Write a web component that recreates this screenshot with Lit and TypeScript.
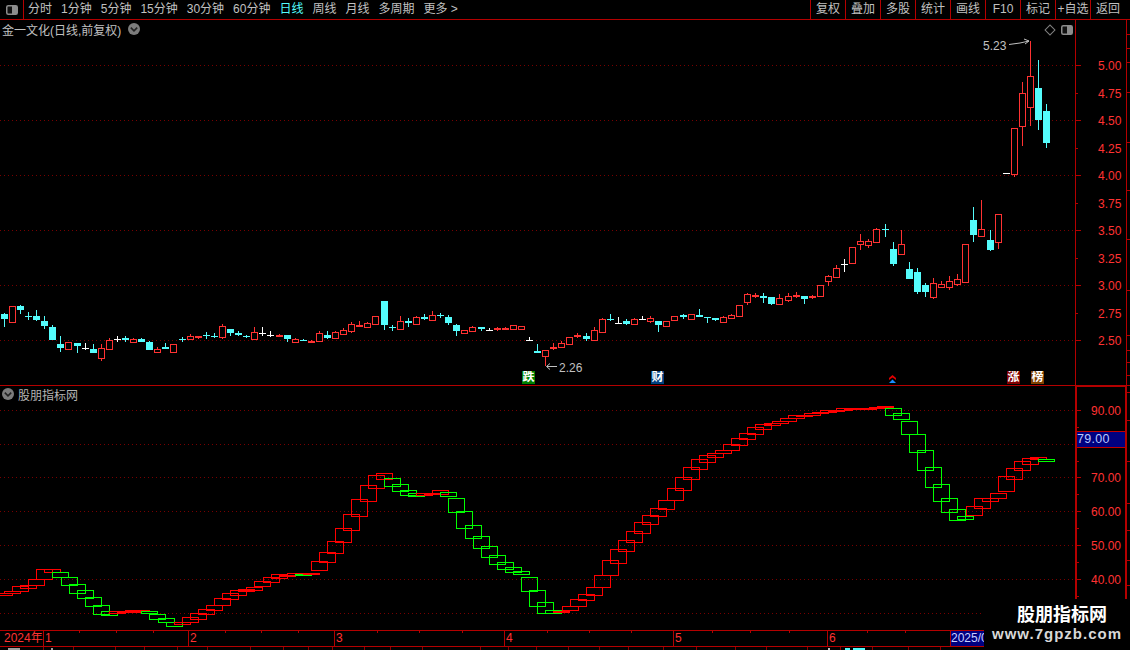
import { LitElement, html, svg, css } from "lit";
import { customElement } from "lit/decorators.js";

type C = [string, number, number, number, number];
const candles: C[] = [
["c",314,319,313,327],["r",306,322,306,322],["c",306,310,305,314],["c",316,317,312,320],["c",316,320,310,321],["c",321,326,316,329],["c",327,340,325,340],["c",344,348,336,352],["r",342,349,342,350],["c",343,346,343,353],
["w",348,349,343,350],["c",349,353,344,353],["r",348,358,344,361],["r",340,349,338,349],["w",339,340,336,342],["c",338,340,336,342],["r",339,342,338,343],["c",339,342,338,342],["c",342,350,341,350],["r",349,352,347,352],
["c",347,349,343,349],["r",344,352,344,352],["c",339,340,337,342],["r",336,339,334,339],["R",336,338,336,339],["c",335,336,332,339],["c",336,337,333,338],["r",326,337,324,339],["c",329,333,329,336],["c",333,335,331,336],
["c",336,337,335,338],["r",332,339,327,339],["w",333,334,327,336],["w",335,336,331,337],["R",335,337,334,337],["c",335,339,335,342],["r",339,342,338,342],["c",340,341,339,341],["R",341,343,340,343],["r",333,341,331,341],
["c",335,338,331,339],["r",332,338,331,338],["r",330,334,328,335],["r",324,331,322,333],["R",325,327,321,327],["r",323,327,322,327],["r",316,324,316,324],["c",301,325,301,330],["c",327,328,325,331],["r",321,329,316,329],
["c",321,323,318,327],["r",317,324,316,324],["c",317,319,314,320],["r",315,320,311,321],["c",315,316,313,318],["c",317,323,315,325],["c",325,331,324,336],["r",330,333,330,333],["r",327,331,326,331],["c",327,329,327,331],
["w",330,331,328,331],["R",328,330,327,331],["R",328,330,327,330],["r",325,329,325,330],["r",326,329,326,329],["w",340,341,337,341],["c",351,353,344,353],["r",350,356,350,366],["R",347,349,343,350],["r",343,347,341,347],
["r",337,344,337,344],["R",335,337,333,338],["c",336,339,333,341],["r",330,340,327,340],["r",319,332,318,332],["c",319,320,314,321],["w",323,324,317,324],["c",321,324,319,325],["r",319,324,318,324],["w",319,320,316,320],
["r",318,321,316,323],["c",321,325,321,332],["r",321,326,321,326],["r",316,320,316,320],["c",315,317,314,319],["r",314,319,314,319],["c",315,317,309,317],["c",317,318,317,323],["c",318,320,318,321],["r",317,322,316,322],
["r",315,318,314,318],["r",305,316,305,316],["r",294,302,293,305],["R",295,297,293,298],["c",296,298,293,303],["c",297,304,297,305],["r",298,304,294,304],["r",296,300,293,302],["R",295,297,292,298],["c",296,299,296,304],
["R",296,298,295,299],["r",285,296,285,296],["r",276,281,275,286],["r",268,277,265,277],["w",264,265,259,272],["r",247,263,247,263],["r",241,244,234,250],["r",241,245,239,248],["r",229,242,228,242],["c",229,230,224,237],
["c",249,264,242,266],["r",244,254,230,254],["c",269,279,262,279],["c",272,292,268,294],["c",285,292,283,297],["r",283,297,278,299],["r",284,287,281,287],["r",281,287,276,290],["r",279,284,274,286],["r",244,282,244,282],
["c",220,235,207,242],["r",229,236,200,237],["c",240,250,230,251],["r",214,242,214,249],["w",173,174,173,174],["r",128,174,128,177],["r",93,126,82,146],["r",76,107,41,126],["c",88,120,60,130],["c",111,143,104,148],
];
// [colour, top, bottom] per box, starting one step left of the first full box
const boxes: [string, number, number][] = ([
"r593,595","r591,593","r586,591","r585,588","r579,585","r569,579","r569,572","g572,577","g577,585","g584,593","g590,598","g597,606","g605,614","g611,615",
"r611,613","r611,612","r610,612","r610,611","g611,613","g614,619","g618,622","g622,626","r622,624","r617,622","r613,619","r609,614","r605,610","r598,605","r593,599","r590,595",
"r589,591","r587,590","r581,586","r577,582","r574,578","r574.5,575.5","r573,574.5","g574,574.5","r573,573.5","r561,570","r552,562","r541,553","r528,542","r514,530","r499,516","r485,501","r475,488","r473,479",
"g478,486","g484,491","g490,495","g493,496","r493,495","r493,494","r490,494","g492,496","g498,512","g511,528","g525,538","g536,548","g546,557","g555,564","g562,569","g567,572","g571,574","g577,591","g590,606","g602,613","g610,613",
"r610.5,612","r606,610","r599,606","r594,600","r587,595","r575,587","r560,575","r549,563","r540,551","r531,542","r522,533","r515,524","r508,516","r500,509","r488,500","r477,490","r467,479","r459,469","r455,462","r453,457","r450,453","r444,450","r438,445","r433,439","r427,434","r424,429","r423,425","r421,423","r418,421","r415,418","r415,416","r413,415","r412,413","r410,412","r410,411","r408,410","r408,409","r407.5,408.5","r407.5,408","r407,407.5","r405.5,407",
"g408,415","g413,419","g421,434","g434,452","g450,470","g467,487","g484,501","g498,512","g509,520","g516,519",
"r506,515","r498,508","r498,501","r493,498","r476,491","r468,479","r461,470","r458,464","r457,459","g459,461",
] as string[]).map((s) => {
  const [a, b] = s.slice(1).split(",").map(Number);
  return [s[0], a, b] as [string, number, number];
});

const topLabels: [string, number][] = [["5.00",65],["4.75",93],["4.50",120],["4.25",148],["4.00",175],["3.75",203],["3.50",230],["3.25",258],["3.00",285],["2.75",313],["2.50",340]];
const botLabels: [string, number][] = [["90.00",410],["70.00",477],["60.00",511],["50.00",545],["40.00",579]];
const botGrid = [410,444,477,511,545,579,613];
const leftItems = ["分时","1分钟","5分钟","15分钟","30分钟","60分钟","日线","周线","月线","多周期"];
const rightItems = ["复权","叠加","多股","统计","画线","F10","标记","+自选","返回"];
const months: [string, number][] = [["1",43],["2",188],["3",334],["4",504],["5",673],["6",827]];
const dateTicks = [79,116,153,225,261,298,377,419,462,547,589,631,712,750,789,867,905];
const tabSeps = [43,73,115,144,177,207,250,283,308,332,364,390,422,480,508,536,568,599,628,663,696,735,766,807,840,872,908,940];
const edgeTicks = [34,48,62,92,142,190,239,290,335,350,362,375,392,420,461,503,530,560,585];

const RED = "#ff3232", CYAN = "#54fcfc", LINE = "#b40000", GRID = "#780000";
const cx = (i: number) => Math.floor(4.3 + 8.08 * i);

function candle(c: C, i: number) {
  const [t, top, bot, hi, lo] = c;
  const x = cx(i);
  const col = t === "c" ? CYAN : t === "w" ? "#fff" : RED;
  const h = bot - top;
  const wick = t === "r"
    ? svg`<path d="M${x + .5} ${hi}V${top}M${x + .5} ${bot}V${lo}" stroke=${col} />`
    : svg`<path d="M${x + .5} ${hi}V${lo}" stroke=${col} />`;
  const body = t === "r"
    ? svg`<rect x=${x - 3 + .5} y=${top + .5} width="6" height=${h} fill="#000" stroke=${col} />`
    : svg`<rect x=${x - 3} y=${top} width="7" height=${Math.max(h, 1)} fill=${col} />`;
  return svg`${wick}${body}`;
}

function box([c, t, b]: [string, number, number], k: number) {
  const x = Math.round(4 + 8.08 * (k - 1)) + .5;
  const top = Math.round(t);
  const h = Math.max(Math.round(b) - top, 1);
  return svg`<rect x=${x} y=${top + .5} width="16" height=${h} stroke=${c === "r" ? "#ff0000" : "#00ff00"}/>`;
}

@customElement("chart-icon")
class ChartIcon extends LitElement {
  static styles = css`:host{display:block;width:12px;height:10px} svg{display:block}`;
  render() {
    return html`<svg width="12" height="10" viewBox="0 0 12 10"><rect x=".75" y=".75" width="10.5" height="8.5" rx="1.5" fill="#111" stroke="#8c8c8c" stroke-width="1.5"/><rect x="6" y="1" width="5" height="8" fill="#8c8c8c"/></svg>`;
  }
}

@customElement("round-chevron")
class RoundChevron extends LitElement {
  static styles = css`:host{display:block;width:12px;height:12px} svg{display:block}`;
  render() {
    return html`<svg width="12" height="12" viewBox="0 0 12 12"><circle cx="6" cy="6" r="6" fill="#7c7c7c"/><path d="M2.8 4.6 6 7.8 9.2 4.6" fill="none" stroke="#222" stroke-width="1.6"/></svg>`;
  }
}

@customElement("app-root")
export class AppRoot extends LitElement {
  static styles = css`
    :host { display: block; width: 1130px; height: 650px; background: #000; position: relative; overflow: hidden;
      font-family: "Liberation Sans", "Noto Sans CJK SC", sans-serif; font-size: 12px; color: #c0c0c0; }
    svg { display: block; }
    .toolbar { display: flex; height: 19px; border-bottom: 1px solid #b40000; align-items: stretch; }
    .menu-btn { width: 24px; border-right: 1px solid #b40000; display: flex; align-items: center; justify-content: center; box-sizing: border-box; }
    .left { display: flex; gap: 9px; padding-left: 4px; align-items: center; line-height: 19px; flex: 1; }
    .left .on { color: #54fcfc; }
    .right { display: flex; padding-right: 5px; }
    .right span { width: 34px; border-left: 1px solid #b40000; text-align: center; line-height: 19px; white-space: nowrap; overflow: hidden; }
    .pane { position: relative; }
    .top { height: 365px; border-bottom: 1px solid #b40000; }
    .bottom { height: 244px; }
    .title { position: absolute; left: 2px; top: 1px; display: flex; align-items: center; gap: 7px; height: 16px; white-space: nowrap; }
    .tools { position: absolute; left: 1046px; top: 5px; display: flex; align-items: center; gap: 7px; }
    .diamond { width: 6px; height: 6px; border: 1px solid #808080; transform: rotate(45deg); }
    .sub-title { position: absolute; left: 2px; top: 0; display: flex; align-items: center; gap: 4px; height: 16px; white-space: nowrap; color: #b4b4b4; }
    .badge { position: absolute; top: 351px; width: 13px; height: 13px; line-height: 13px; text-align: center; color: #fff; font-size: 12px; font-weight: 700; overflow: hidden; }
    .b-green { background: #008000; } .b-blue { background: #004080; } .b-red { background: #800000; } .b-brown { background: #804000; }
    .price-tag { position: absolute; left: 1077px; top: 45px; width: 48px; height: 15px; background: #000080; border-top: 1px solid #c00000; border-bottom: 1px solid #c00000; color: #b8c8ff; line-height: 15px; font-size: 12.5px; letter-spacing: .3px; }
    .dates { position: relative; height: 15px; border-top: 1px solid #b40000; border-bottom: 1px solid #b40000; color: #ff3232; }
    .year { position: absolute; left: 4px; top: 0; line-height: 15px; }
    .month { position: absolute; top: 0; height: 15px; line-height: 15px; border-left: 1px solid #b40000; padding-left: 1px; }
    .tick { position: absolute; top: 0; width: 1px; height: 2px; background: #b40000; }
    .range { position: absolute; left: 950px; top: 0; width: 50px; height: 15px; background: #000080; border-left: 1px solid #b40000; color: #c8d0ff; line-height: 15px; white-space: nowrap; box-sizing: border-box; }
    .status { position: relative; height: 3px; overflow: hidden; }
    .sep { position: absolute; top: 0; width: 1px; height: 3px; background: #8c0000; }
    .frag { position: absolute; top: 1px; height: 2px; }
    .mark { position: absolute; left: 984px; top: 599px; width: 146px; height: 51px; background: #000; display: flex; flex-direction: column; align-items: center; color: #fff; font-weight: 700; padding-left: 3px; box-sizing: border-box; }
    .mark .cn { font-size: 18px; line-height: 22px; margin-top: 3px; margin-left: 7px; font-family: "Noto Sans CJK SC", sans-serif; }
    .mark .url { font-size: 15px; line-height: 16px; margin-top: 2px; margin-right: 3px; letter-spacing: 1px; color: #d8d8d8; }
  `;

  render() {
    return html`
      <div class="toolbar">
        <div class="menu-btn"><chart-icon></chart-icon></div>
        <div class="left">
          ${leftItems.map((t) => html`<span class=${t === "日线" ? "on" : ""}>${t}</span>`)}
          <span>更多 &gt;</span>
        </div>
        <div class="right">${rightItems.map((t) => html`<span>${t}</span>`)}</div>
      </div>

      <div class="pane top">
        <svg width="1130" height="365" viewBox="0 20 1130 365" shape-rendering="crispEdges">
          ${topLabels.map(([l, y], i) => svg`
            ${i % 2 === 0 ? svg`<path d="M0 ${y + .5}H1075" stroke=${GRID} stroke-dasharray="1 3"/>` : ""}
            <path d="M1075 ${y + .5}H${i % 2 === 0 ? 1081 : 1078}" stroke=${LINE}/>
            <text x="1098" y=${y + 4.5} fill=${RED} font-size="12" shape-rendering="auto">${l}</text>`)}
          <path d="M1075.5 20V385M1126.5 20V385" stroke=${LINE}/>
          ${edgeTicks.filter((y) => y < 385).map((y) => svg`<path d="M1127 ${y + .5}H1130" stroke=${LINE}/>`)}
          ${candles.map(candle)}
          <g shape-rendering="auto" fill="none" stroke="#c0c0c0">
            <path d="M1009 44.5 1020 43 1029 41M1024 39 1029 41 1025 44"/>
            <path d="M557 366.5H547M550 363.5 546.5 366.5 550 369.5"/>
          </g>
          <text x="983" y="50" fill="#c0c0c0" font-size="12" shape-rendering="auto">5.23</text>
          <text x="559" y="372" fill="#c0c0c0" font-size="12" shape-rendering="auto">2.26</text>
          <g shape-rendering="auto">
            <path d="M889 378 892.5 375 896 378V380L892.5 377.5 889 380Z" fill="#e00000"/>
            <path d="M889 383 892.5 379.5 896 383Z" fill="#1a8cff"/>
          </g>
        </svg>
        <div class="title"><span>金一文化(日线,前复权)</span><round-chevron></round-chevron></div>
        <div class="tools"><span class="diamond"></span><chart-icon></chart-icon></div>
        <span class="badge b-green" style="left:522px">跌</span>
        <span class="badge b-blue" style="left:651px">财</span>
        <span class="badge b-red" style="left:1007px">涨</span>
        <span class="badge b-brown" style="left:1031px">榜</span>
      </div>

      <div class="pane bottom">
        <svg width="1130" height="244" viewBox="0 386 1130 244" shape-rendering="crispEdges">
          ${botGrid.map((y) => svg`<path d="M0 ${y + .5}H1075" stroke=${GRID} stroke-dasharray="1 3"/>`)}
          ${botGrid.map((y) => svg`<path d="M1077 ${y + .5}H1081" stroke=${LINE}/>`)}
          ${botGrid.slice(0, 6).map((y) => svg`<path d="M1077 ${y + 17.5}H1079" stroke=${LINE}/>`)}
          ${botLabels.map(([l, y]) => svg`<text x="1091" y=${y + 4.5} fill=${RED} font-size="12" shape-rendering="auto">${l}</text>`)}
          <path d="M1076 386V630" stroke=${LINE} stroke-width="2"/>
          <path d="M1126 386V630M1076 386.5H1126" stroke=${LINE} stroke-width="1.5"/>
          ${edgeTicks.filter((y) => y > 385).map((y) => svg`<path d="M1127 ${y + .5}H1130" stroke=${LINE}/>`)}
          <g fill="none">${boxes.map(box)}</g>
        </svg>
        <div class="sub-title"><round-chevron></round-chevron><span>股朋指标网</span></div>
        <div class="price-tag">79.00</div>
      </div>

      <div class="dates">
        ${dateTicks.map((x) => html`<span class="tick" style="left:${x}px"></span>`)}
        <span class="year">2024年</span>
        ${months.map(([m, x]) => html`<span class="month" style="left:${x}px">${m}</span>`)}
        <span class="range">2025/06</span>
      </div>
      <div class="status">
        ${tabSeps.map((x) => html`<span class="sep" style="left:${x}px"></span>`)}
        <span class="frag" style="left:8px;width:12px;background:#a0a0a0"></span>
        <span class="frag" style="left:51px;width:2px;background:#a0a0a0"></span>
        <span class="frag" style="left:828px;width:2px;background:#c0c0c0"></span>
        <span class="frag" style="left:845px;width:5px;background:#54fcfc"></span>
        <span class="frag" style="left:853px;width:12px;background:#54fcfc"></span>
      </div>

      <div class="mark"><span class="cn">股朋指标网</span><span class="url">www.7gpzb.com</span></div>
    `;
  }
}
void ChartIcon; void RoundChevron;
